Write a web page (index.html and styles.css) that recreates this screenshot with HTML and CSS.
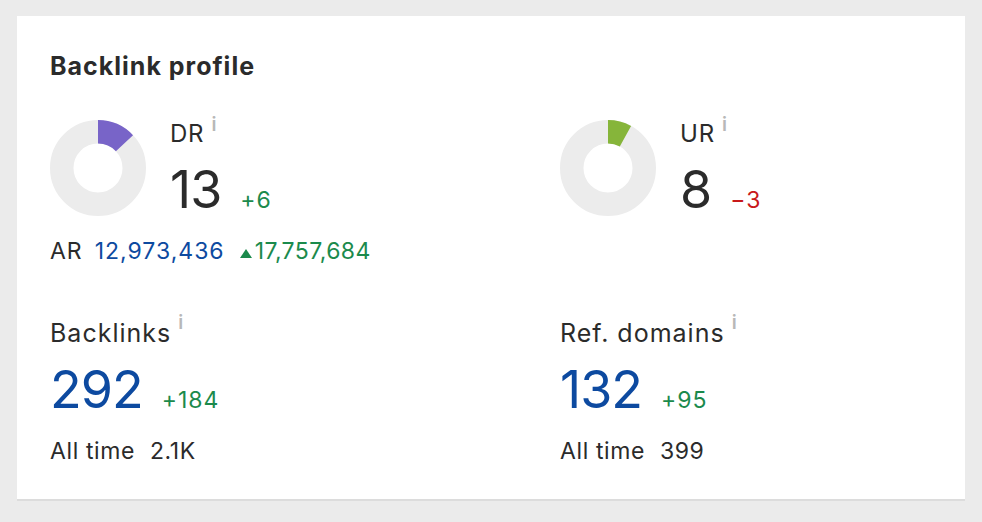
FILE: index.html
```html
<!DOCTYPE html>
<html>
<head>
<meta charset="utf-8">
<link rel="stylesheet" href="styles.css">
</head>
<body>
<div class="card">
  <h2 class="title">Backlink profile</h2>
  <div class="grid top">
    <div class="col">
      <div class="rating">
        <svg class="donut" width="96" height="96" viewBox="0 0 96 96">
          <circle cx="48" cy="48" r="36.25" fill="none" stroke="#ececec" stroke-width="23.5"/>
          <circle cx="48" cy="48" r="36.25" fill="none" stroke="#7864c8" stroke-width="23.5" stroke-dasharray="29.6 300" transform="rotate(-90 48 48)"/>
        </svg>
        <div class="metric">
          <div class="label">DR<span class="info">i</span></div>
          <div class="values"><span class="big">13</span><span class="delta up">+6</span></div>
        </div>
      </div>
      <div class="ar">
        <span class="ar-label">AR</span>
        <span class="blue">12,973,436</span>
        <span class="up ar-delta"><span class="tri"></span>17,757,684</span>
      </div>
    </div>
    <div class="col">
      <div class="rating">
        <svg class="donut" width="96" height="96" viewBox="0 0 96 96">
          <circle cx="48" cy="48" r="36.25" fill="none" stroke="#ececec" stroke-width="23.5"/>
          <circle cx="48" cy="48" r="36.25" fill="none" stroke="#86b53a" stroke-width="23.5" stroke-dasharray="18.2 300" transform="rotate(-90 48 48)"/>
        </svg>
        <div class="metric">
          <div class="label">UR<span class="info">i</span></div>
          <div class="values"><span class="big">8</span><span class="delta down">−3</span></div>
        </div>
      </div>
    </div>
  </div>
  <div class="grid bottom">
    <div class="col">
      <div class="label2">Backlinks<span class="info">i</span></div>
      <div class="values"><span class="big blue">292</span><span class="delta up">+184</span></div>
      <div class="alltime">All time<span class="at-val">2.1K</span></div>
    </div>
    <div class="col">
      <div class="label2">Ref. domains<span class="info">i</span></div>
      <div class="values"><span class="big blue">132</span><span class="delta up">+95</span></div>
      <div class="alltime">All time<span class="at-val">399</span></div>
    </div>
  </div>
</div>
</body>
</html>
```
FILE: styles.css
```css
html, body {
  margin: 0;
  padding: 0;
}
body {
  background: #ebebeb;
  font-family: Inter, "Noto Sans", sans-serif;
  color: #2b2b2b;
  width: 982px;
  height: 522px;
  overflow: hidden;
}
.card {
  box-sizing: border-box;
  margin: 16px 0 0 17px;
  width: 948px;
  height: 485px;
  background: #fff;
  border-bottom: 2px solid #dcdcdc;
  padding: 35px 33px 0 33px;
}
.title {
  margin: 0;
  font-size: 25px;
  line-height: 30px;
  font-weight: 700;
  letter-spacing: 1px;
  color: #2b2b2b;
}
.grid {
  display: grid;
  grid-template-columns: 510px 1fr;
}
.top {
  margin-top: 39px;
}
.rating {
  display: flex;
  align-items: flex-start;
  gap: 24px;
}
.donut {
  display: block;
  flex: none;
}
.metric {
  display: flex;
  flex-direction: column;
  gap: 14px;
}
.label {
  font-size: 24px;
  line-height: 28px;
  letter-spacing: 0.8px;
}
.info {
  font-size: 19px;
  line-height: 0;
  color: #b8b8b8;
  font-weight: 600;
  vertical-align: 11px;
  margin-left: 7px;
  letter-spacing: 0;
}
.values {
  display: flex;
  align-items: baseline;
  gap: 19px;
}
.big {
  font-size: 52px;
  line-height: 56px;
  letter-spacing: -1px;
}
.delta {
  font-size: 23px;
  line-height: 26px;
  letter-spacing: 1px;
}
.up { color: #1b8a4c; }
.down { color: #c8191b; }
.blue { color: #0d4aa0; }
.ar {
  margin-top: 20px;
  font-size: 23px;
  line-height: 26px;
  letter-spacing: 1px;
  display: flex;
  align-items: baseline;
  gap: 12px;
}
.ar-delta {
  margin-left: 3px;
  display: inline-flex;
  align-items: baseline;
  gap: 3px;
  letter-spacing: 0.4px;
}
.tri {
  display: inline-block;
  width: 0;
  height: 0;
  border-left: 6px solid transparent;
  border-right: 6px solid transparent;
  border-bottom: 9px solid #1b8a4c;
  position: relative;
  top: -1px;
}
.bottom {
  margin-top: 54px;
}
.label2 {
  font-size: 25px;
  line-height: 30px;
  letter-spacing: 1px;
}
.label2 .info {
  vertical-align: 13px;
}
.bottom .values {
  margin-top: 14px;
}
.alltime {
  margin-top: 19px;
  font-size: 23px;
  line-height: 28px;
  letter-spacing: 0.6px;
}
.at-val {
  margin-left: 15px;
}
```
